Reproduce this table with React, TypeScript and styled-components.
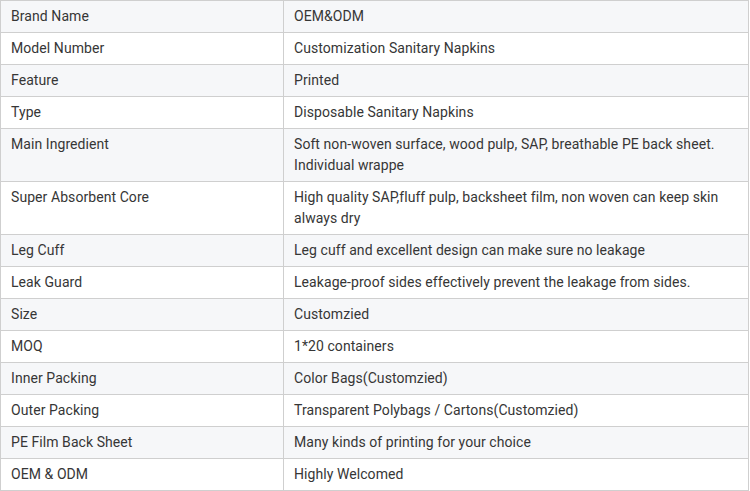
import * as React from "react";
import styled, {createGlobalStyle} from "styled-components";

const GlobalStyle = createGlobalStyle`
  body {
    margin: 0;
    background: #fff;
    font-family: Roboto, "Liberation Sans", Arial, sans-serif;
  }
`;

const SpecTable = styled.table`
  border-collapse: collapse;
  width: 749px;
  table-layout: fixed;
  font-size: 14px;
  line-height: 21px;
  letter-spacing: 0.07px;
  color: #363636;
`;

const Row = styled.tr<{ shaded: boolean }>`
  background: ${props => props.shaded ? '#f6f7f9' : '#fff'};
`;

const Cell = styled.td`
  border: 1px solid #cfcfcf;
  padding: 5px 10px;
  vertical-align: top;
  text-align: left;
`;

const specs: [string, string][] = [
  ['Brand Name', 'OEM&ODM'],
  ['Model Number', 'Customization Sanitary Napkins'],
  ['Feature', 'Printed'],
  ['Type', 'Disposable Sanitary Napkins'],
  ['Main Ingredient', 'Soft non-woven surface, wood pulp, SAP, breathable PE back sheet. Individual wrappe'],
  ['Super Absorbent Core', 'High quality SAP,fluff pulp, backsheet film, non woven can keep skin always dry'],
  ['Leg Cuff', 'Leg cuff and excellent design can make sure no leakage'],
  ['Leak Guard', 'Leakage-proof sides effectively prevent the leakage from sides.'],
  ['Size', 'Customzied'],
  ['MOQ', '1*20 containers'],
  ['Inner Packing', 'Color Bags(Customzied)'],
  ['Outer Packing', 'Transparent Polybags / Cartons(Customzied)'],
  ['PE Film Back Sheet', 'Many kinds of printing for your choice'],
  ['OEM & ODM', 'Highly Welcomed'],
];

export default function App() {
  return (
    <>
      <GlobalStyle/>
      <SpecTable>
        <colgroup>
          <col style={{width: 283}}/>
          <col/>
        </colgroup>
        <tbody>
          {specs.map(([label, value], index) =>
            <Row key={index} shaded={index % 2 === 0}>
              <Cell>{label}</Cell>
              <Cell>{value}</Cell>
            </Row>
          )}
        </tbody>
      </SpecTable>
    </>
  );
}
